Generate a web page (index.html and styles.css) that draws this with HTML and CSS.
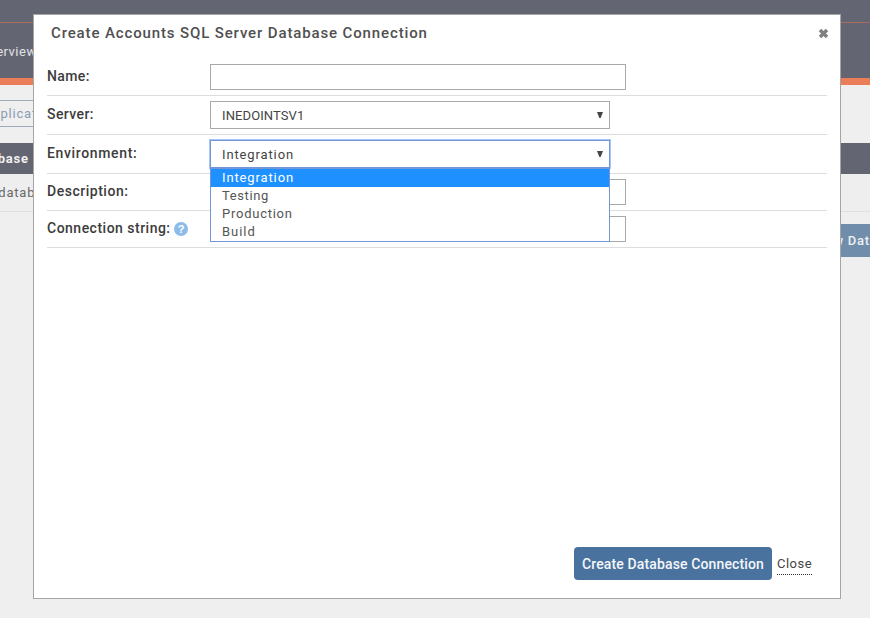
FILE: index.html
```
<!DOCTYPE html>
<html lang="en">
<head>
<meta charset="utf-8">
<title>Create Database Connection</title>
<link rel="stylesheet" href="styles.css">
</head>
<body>
<div class="page">
  <header class="topbar"></header>
  <nav class="tabs"><span>Overview</span></nav>
  <main class="content">
    <div class="filter"><span>Application</span></div>
    <div class="table-head"><span>Database</span></div>
    <div class="table-row"><span>No databases</span></div>
    <div class="actions"><span class="new-button">New Database</span></div>
  </main>
</div>
<section class="dialog">
  <header class="dialog-header">
    <h1>Create Accounts SQL Server Database Connection</h1>
    <svg class="close-icon" width="11" height="11" viewBox="0 0 11 11"><path d="M2 2L9 9M9 2L2 9" stroke="#808080" stroke-width="3.5"/></svg>
  </header>
  <form class="form">
    <div class="row"><label class="l-name">Name:</label><div class="input"></div></div>
    <div class="row tall"><label class="l-server">Server:</label>
      <div class="select"><span class="v-server">INEDOINTSV1</span><svg width="6" height="7" viewBox="0 0 6 7"><path d="M0 0H6L3.6 6H2.4Z" fill="#444"/></svg></div></div>
    <div class="row tall"><label class="l-env">Environment:</label>
      <div class="select focused"><span class="v-int">Integration</span><svg width="6" height="7" viewBox="0 0 6 7"><path d="M0 0H6L3.6 6H2.4Z" fill="#444"/></svg>
        <ul class="options">
          <li class="selected"><span class="v-int">Integration</span></li>
          <li><span class="v-test">Testing</span></li>
          <li><span class="v-prod">Production</span></li>
          <li><span class="v-build">Build</span></li>
        </ul>
      </div></div>
    <div class="row"><label class="l-desc">Description:</label><div class="input"></div></div>
    <div class="row"><label class="l-conn">Connection string:</label><i class="help">?</i><div class="input"></div></div>
  </form>
  <footer class="dialog-footer">
    <div class="submit"><span>Create Database Connection</span></div>
    <a class="close-link">Close</a>
  </footer>
</section>
</body>
</html>
```

FILE: styles.css
```
* { box-sizing: border-box; }
body {
  margin: 0;
  height: 618px;
  overflow: hidden;
  position: relative;
  background: #efefef;
  color: #444;
  font: 13px/18px Roboto, "Liberation Sans", sans-serif;
  white-space: nowrap;
}
.page { height: 618px; overflow: hidden; }
.topbar { height: 23px; background: #636672; border-bottom: 1px solid #a96c5e; }
.tabs {
  height: 62px;
  padding-top: 20px;
  background: #636672;
  border-bottom: 7px solid #e97e58;
  color: #e2e2e4;
}
.tabs span { margin-left: -20px; letter-spacing: 0.5px; }
.content { padding-top: 15px; }
.filter {
  width: 200px;
  height: 27px;
  padding-top: 4px;
  border: 1px solid #9aacbc;
  border-left: 0;
  color: #8d9cb3;
}
.filter span { margin-left: -17px; letter-spacing: 0.8px; }
.table-head {
  height: 31px;
  margin-top: 16px;
  padding-top: 7px;
  background: #636672;
  color: #f0f0f0;
  font-weight: 700;
}
.table-head span { margin-left: -32px; letter-spacing: 0.75px; }
.table-row { height: 38px; padding-top: 10px; background: #eee; border-bottom: 1px solid #e0e0e0; color: #696969; }
.table-row span { margin-left: -24px; letter-spacing: 0.8px; }
.actions { display: flex; justify-content: flex-end; margin-top: 12px; }
.new-button {
  width: 58px;
  height: 33px;
  padding: 8px 0 0 4px;
  background: #708eac;
  color: #eef0f2;
  font-weight: 500;
  letter-spacing: 0.7px;
}
.dialog {
  position: absolute;
  left: 33px;
  top: 14px;
  width: 808px;
  height: 585px;
  display: flex;
  flex-direction: column;
  padding: 0 13px;
  border: 1px solid #a5a5a5;
  background: #fff;
}
.dialog-header { display: flex; justify-content: space-between; height: 44px; padding: 9px 0 0 4px; }
h1 { margin: 0; color: #505050; font-size: 15px; line-height: 18px; font-weight: 500; letter-spacing: 0.87px; }
.close-icon { margin: 4px -2px 0 0; }
.row { display: flex; position: relative; padding: 5px 0; border-bottom: 1px solid #ddd; }
.row label { height: 23px; padding-top: 3px; color: #3c3c3c; font-size: 14px; font-weight: 500; }
.tall label { padding-top: 4px; }
.l-name { letter-spacing: 0.4px; }
.l-server { letter-spacing: 0.4px; }
.l-env { letter-spacing: 0.65px; }
.l-desc { letter-spacing: 0.52px; }
.l-conn { width: 124px; letter-spacing: 0.49px; }
.row .input, .row .select { margin-left: auto; }
.input { width: 416px; height: 26px; margin-right: 201px; border: 1px solid #a9a9a9; background: #fff; }
.select {
  position: relative;
  display: flex;
  justify-content: space-between;
  width: 400px;
  height: 28px;
  margin-right: 217px;
  padding: 5px 6px 0 11px;
  border: 1px solid #a9a9a9;
  background: #fff;
}
.select > svg { margin-top: 5px; }
.focused { z-index: 2; border-color: #7396d8; box-shadow: 0 0 0 1px #a7c5f5; }
.options {
  position: absolute;
  left: -1px;
  top: 27px;
  width: 400px;
  margin: 0;
  padding: 0;
  list-style: none;
  border: 1px solid #7396d8;
  background: #fff;
}
.options li { height: 18px; padding-left: 11px; line-height: 17px; color: #555; }
.options .selected { background: #1e90ff; color: #fff; }
.v-int { letter-spacing: 0.87px; }
.v-server { letter-spacing: 0.1px; }
.v-test { letter-spacing: 0.6px; }
.v-prod { letter-spacing: 0.75px; }
.v-build { letter-spacing: 0.95px; }
.help {
  width: 14px;
  height: 14px;
  margin: 6px 0 0 3px;
  border-radius: 50%;
  background: #8dbce8;
  color: #fff;
  font: bold 11px/14px "Liberation Sans", sans-serif;
  text-align: center;
}
.dialog-footer { display: flex; justify-content: flex-end; margin-top: auto; padding: 0 15px 18px 0; }
.submit {
  width: 198px;
  height: 33px;
  padding: 8px 0 0 8px;
  border-radius: 4px;
  background: #49729f;
  color: #f4f6f8;
  font-size: 14px;
  font-weight: 500;
  letter-spacing: 0.13px;
}
.close-link { width: 35px; height: 20px; margin: 8px 0 0 5px; border-bottom: 1px dotted #333; letter-spacing: 0.5px; }
```
